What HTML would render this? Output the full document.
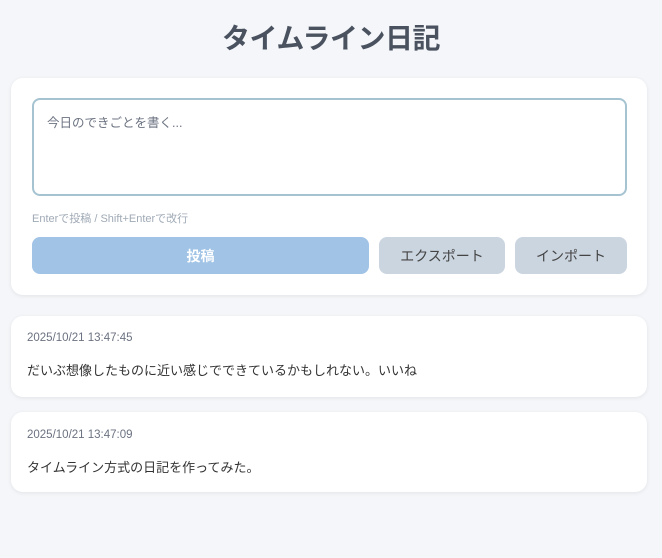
<!DOCTYPE html>
<html><head><meta charset="utf-8"><style>
*{box-sizing:border-box;margin:0;padding:0}
body{width:662px;height:558px;background:#f4f6f9;font-family:"Liberation Sans","Noto Sans CJK JP",sans-serif;position:relative;overflow:hidden}
h1{position:absolute;top:19px;left:0;width:662px;text-align:center;font-size:28px;font-weight:bold;color:#4a5260;line-height:40px;letter-spacing:-0.5px}
.card{position:absolute;left:11px;width:636px;background:#fff;border-radius:12px;box-shadow:0 1px 4px rgba(0,0,0,0.08)}
.ta{position:absolute;left:21px;top:20px;width:595px;height:98px;border:2px solid #a6c3d2;border-radius:8px;padding:12px 13px;font-size:12.5px;color:#6b7280}
.hint{position:absolute;left:21px;top:132px;font-size:11px;color:#a0aab6}
.btn{position:absolute;top:159px;height:37px;border-radius:8px;font-size:14px;display:flex;align-items:center;justify-content:center}
.date{position:absolute;left:16px;font-size:11.5px;color:#6b7280}
.txt{position:absolute;left:16px;font-size:13px;color:#333}
</style></head><body>
<h1>タイムライン日記</h1>
<div class="card" style="top:78px;height:217px">
<div class="ta">今日のできごとを書く...</div>
<div class="hint">Enterで投稿 / Shift+Enterで改行</div>
<div class="btn" style="left:21px;width:337px;background:#a0c3e6;color:#fff;font-weight:bold">投稿</div>
<div class="btn" style="left:368px;width:126px;background:#cbd5df;color:#444">エクスポート</div>
<div class="btn" style="left:504px;width:112px;background:#cbd5df;color:#444">インポート</div>
</div>
<div class="card" style="top:316px;height:81px">
<div class="date" style="top:16px">2025/10/21 13:47:45</div>
<div class="txt" style="top:44px">だいぶ想像したものに近い感じでできているかもしれない。いいね</div>
</div>
<div class="card" style="top:412px;height:80px">
<div class="date" style="top:17px">2025/10/21 13:47:09</div>
<div class="txt" style="top:45px">タイムライン方式の日記を作ってみた。</div>
</div>
</body></html>
